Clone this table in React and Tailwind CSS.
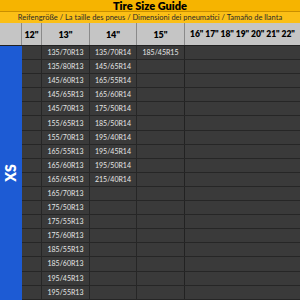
import React from "react";

const r13 = ["135/70R13","135/80R13","145/60R13","145/65R13","145/70R13","155/65R13","155/70R13","165/55R13","165/60R13","165/65R13","165/70R13","175/50R13","175/55R13","175/60R13","185/55R13","185/60R13","195/45R13","195/55R13"];
const r14 = ["135/70R14","145/65R14","165/55R14","165/60R14","175/50R14","185/50R14","195/40R14","195/45R14","195/50R14","215/40R14"];
const r15 = ["185/45R15"];

export default function App() {
  const font = { fontFamily: "Lato, 'Open Sans', sans-serif" };
  return (
    <div className="w-[300px] h-[300px] overflow-hidden bg-[#3a3a3a]" style={font}>
      <div className="h-[12px] bg-[#f6b400] border-b border-[#c98f00] flex items-center justify-center text-[11px] font-extrabold text-black leading-none">
        Tire Size Guide
      </div>
      <div className="h-[11px] bg-[#fbbf16] flex items-center justify-center text-[7.5px] text-[#2a2a2a] leading-none">
        Reifengröße / La taille des pneus / Dimensioni dei pneumatici / Tamaño de llanta
      </div>
      <div className="h-[23px] bg-[#c5c5c5] flex text-[9px] font-extrabold text-black leading-none border-b border-[#222]">
        <div className="w-[22px] border-r border-[#8a8a8a]"></div>
        <div className="w-[20px] border-r border-[#8a8a8a] flex items-center justify-center">12"</div>
        <div className="w-[48px] border-r border-[#8a8a8a] flex items-center justify-center">13"</div>
        <div className="w-[47px] border-r border-[#8a8a8a] flex items-center justify-center">14"</div>
        <div className="w-[48px] border-r border-[#8a8a8a] flex items-center justify-center">15"</div>
        <div className="flex-1 flex items-center justify-between pl-[5px] pr-[5px] text-[8.5px]">
          <span>16"</span><span>17"</span><span>18"</span><span>19"</span><span>20"</span><span>21"</span><span>22"</span>
        </div>
      </div>
      <div className="flex">
        <div className="w-[22px] bg-[#1d5bd4] flex items-center justify-center shrink-0 h-[254px]">
          <span className="-rotate-90 text-white font-extrabold text-[14px] leading-none inline-block">XS</span>
        </div>
        <div className="flex-1 flex flex-col">
          {r13.map((t, i) => (
            <div key={i} className="h-[14.1px] flex border-b border-[#262626] text-[7px] text-[#e6e6e6] leading-none shrink-0">
              <div className="w-[20px] border-r border-[#262626]"></div>
              <div className="w-[48px] border-r border-[#262626] flex items-center justify-center">{t}</div>
              <div className="w-[47px] border-r border-[#262626] flex items-center justify-center">{r14[i] || ""}</div>
              <div className="w-[48px] border-r border-[#222] flex items-center justify-center">{r15[i] || ""}</div>
              <div className="flex-1"></div>
            </div>
          ))}
        </div>
      </div>
    </div>
  );
}
